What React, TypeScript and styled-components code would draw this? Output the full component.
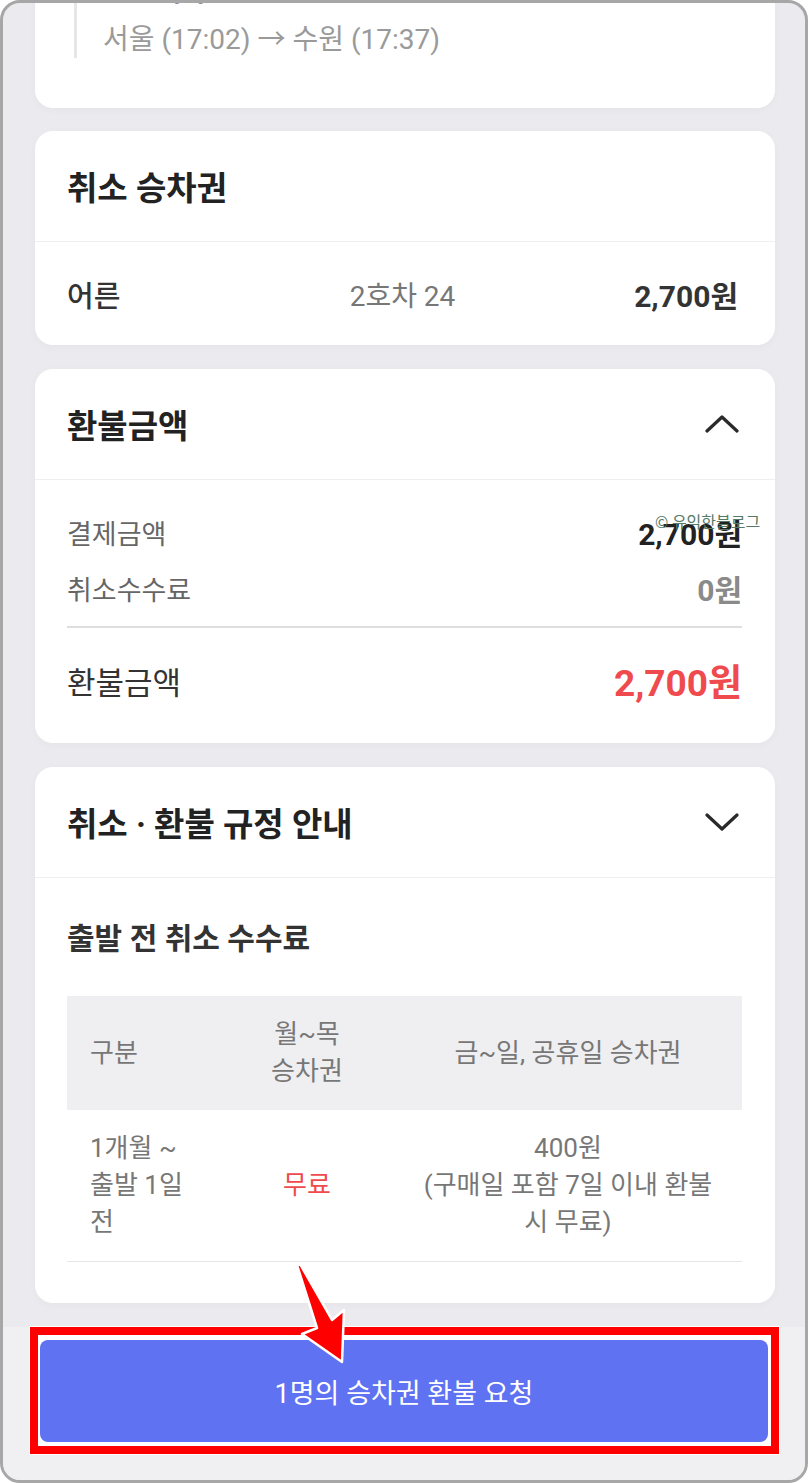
import React from "react";
import styled, { createGlobalStyle } from "styled-components";

const GlobalStyle = createGlobalStyle`
  * { box-sizing: border-box; }
  body {
    margin: 0;
    font-family: Roboto, "Noto Sans CJK KR", sans-serif;
    background: #ffffff;
  }
`;

const ChevronIcon = ({ up }: { up?: boolean }) => (
  <svg width="34" height="18" viewBox="0 0 34 18">
    <polyline
      points={up ? "2,16 17,2 32,16" : "2,2 17,16 32,2"}
      fill="none"
      stroke="#2a2a2a"
      strokeWidth="3.2"
      strokeLinecap="round"
      strokeLinejoin="round"
    />
  </svg>
);

const App = () => {
  return (
    <>
      <GlobalStyle />
      <Frame>
        <Watermark>© 유익한블로그</Watermark>
        <Arrow width="70" height="110" viewBox="0 0 70 110">
          <path
            d="M7 3 L10 2 L42 58 L54 48 L52 100 L12 72 L27 66 Z"
            fill="#ff0000"
            stroke="#ffffff"
            strokeWidth="2.5"
            strokeLinejoin="round"
          />
        </Arrow>
        <RouteCard>
          <RouteBlock>
            <RouteName>ITX-새마을 1호</RouteName>
            <RouteText>서울 (17:02) → 수원 (17:37)</RouteText>
          </RouteBlock>
        </RouteCard>

        <Card>
          <CardHeader>
            <CardTitle>취소 승차권</CardTitle>
          </CardHeader>
          <TicketRow>
            <TicketType>어른</TicketType>
            <TicketSeat>2호차 24</TicketSeat>
            <TicketPrice>2,700원</TicketPrice>
          </TicketRow>
        </Card>

        <Card>
          <CardHeader>
            <CardTitle>환불금액</CardTitle>
            <ChevronIcon up />
          </CardHeader>
          <AmountBody>
            <AmountRow>
              <AmountLabel>결제금액</AmountLabel>
              <AmountValue>2,700원</AmountValue>
            </AmountRow>
            <AmountRow>
              <AmountLabel>취소수수료</AmountLabel>
              <AmountValue $muted>0원</AmountValue>
            </AmountRow>
            <AmountDivider />
            <TotalRow>
              <TotalLabel>환불금액</TotalLabel>
              <TotalValue>2,700원</TotalValue>
            </TotalRow>
          </AmountBody>
        </Card>

        <Card>
          <CardHeader>
            <CardTitle>취소 · 환불 규정 안내</CardTitle>
            <ChevronIcon />
          </CardHeader>
          <RuleBody>
            <RuleTitle>출발 전 취소 수수료</RuleTitle>
            <FeeTable>
              <colgroup>
                <col style={{ width: 153 }} />
                <col style={{ width: 174 }} />
                <col style={{ width: 348 }} />
              </colgroup>
              <thead>
                <tr>
                  <HeadCell $left>구분</HeadCell>
                  <HeadCell>월~목 승차권</HeadCell>
                  <HeadCell>금~일, 공휴일 승차권</HeadCell>
                </tr>
              </thead>
              <tbody>
                <tr>
                  <BodyCell $left>1개월 ~ 출발 1일 전</BodyCell>
                  <BodyCell $red>무료</BodyCell>
                  <BodyCell>
                    400원
                    <br />
                    (구매일 포함 7일 이내 환불 시 무료)
                  </BodyCell>
                </tr>
              </tbody>
            </FeeTable>
          </RuleBody>
        </Card>

        <BottomArea>
          <HighlightBox>
            <RefundButton>1명의 승차권 환불 요청</RefundButton>
          </HighlightBox>
        </BottomArea>
      </Frame>
    </>
  );
};

const Frame = styled.div`
  position: relative;
  width: 808px;
  height: 1483px;
  border: 3px solid #a7a7a7;
  border-radius: 20px;
  overflow: hidden;
  background: #ebebef;
  display: flex;
  flex-direction: column;
  gap: 24px;
  padding: 0 30px 0 32px;
`;

const Card = styled.div`
  background: #ffffff;
  border-radius: 18px;
  box-shadow: 0 2px 8px rgba(0, 0, 0, 0.03);
  flex-shrink: 0;
`;

const RouteCard = styled(Card)`
  margin-top: -80px;
  margin-bottom: -1px;
  padding: 51px 32px 50px 39px;
`;

const RouteBlock = styled.div`
  border-left: 3px solid #e6e6e8;
  padding-left: 26px;
`;

const RouteName = styled.div`
  font-size: 28px;
  line-height: 36px;
  font-weight: 700;
  color: #333;
  margin-bottom: 12px;
`;

const RouteText = styled.div`
  font-size: 28px;
  line-height: 36px;
  color: #9a9a9a;
`;

const CardHeader = styled.div`
  height: 111px;
  display: flex;
  align-items: center;
  justify-content: space-between;
  padding: 0 36px 0 32px;
  border-bottom: 1px solid #efeff1;
`;

const CardTitle = styled.div`
  font-size: 33px;
  font-weight: 700;
  color: #222;
`;

const TicketRow = styled.div`
  height: 103px;
  display: grid;
  grid-template-columns: 1fr auto 1fr;
  align-items: center;
  padding: 0 37px 0 32px;
`;

const TicketType = styled.div`
  font-size: 29px;
  font-weight: 500;
  color: #333;
`;

const TicketSeat = styled.div`
  font-size: 28px;
  color: #777;
`;

const TicketPrice = styled.div`
  justify-self: end;
  font-size: 30px;
  font-weight: 700;
  color: #333;
`;

const AmountBody = styled.div`
  padding: 24px 33px 11px 32px;
`;

const AmountRow = styled.div`
  height: 56px;
  display: flex;
  align-items: center;
  justify-content: space-between;
`;

const AmountLabel = styled.div`
  font-size: 27px;
  color: #666;
`;

const AmountValue = styled.div<{ $muted?: boolean }>`
  font-size: 30px;
  font-weight: 700;
  color: ${(p) => (p.$muted ? "#8a8a8a" : "#222")};
`;

const AmountDivider = styled.div`
  margin-top: 10px;
  height: 2px;
  background: #dedee0;
`;

const TotalRow = styled.div`
  height: 104px;
  display: flex;
  align-items: center;
  justify-content: space-between;
`;

const TotalLabel = styled.div`
  font-size: 31px;
  color: #333;
`;

const TotalValue = styled.div`
  font-size: 37px;
  font-weight: 700;
  color: #ef4b4e;
`;

const RuleBody = styled.div`
  padding: 43px 33px 41px 32px;
`;

const RuleTitle = styled.div`
  font-size: 30px;
  line-height: 36px;
  font-weight: 700;
  color: #333;
  margin-bottom: 39px;
`;

const FeeTable = styled.table`
  width: 675px;
  border-collapse: collapse;
  table-layout: fixed;
  word-break: keep-all;
`;

const HeadCell = styled.th<{ $left?: boolean }>`
  background: #efeff2;
  font-size: 26px;
  line-height: 37px;
  font-weight: 400;
  color: #777;
  padding: 20px 23px;
  text-align: ${(p) => (p.$left ? "left" : "center")};
  vertical-align: middle;
`;

const BodyCell = styled.td<{ $left?: boolean; $red?: boolean }>`
  font-size: 26px;
  line-height: 37px;
  color: ${(p) => (p.$red ? "#ef4b4e" : "#777")};
  padding: 20px 23px;
  text-align: ${(p) => (p.$left ? "left" : "center")};
  vertical-align: middle;
  border-bottom: 1px solid #e6e6e8;
`;

const BottomArea = styled.div`
  flex: 1;
  margin: 0 -30px 0 -32px;
  padding: 0 26px 0 27px;
  background: #f0f0f2;
`;

const HighlightBox = styled.div`
  border: 8px solid #ff0000;
  outline: 1px solid #ffffff;
  padding: 5px 3px 4px 2px;
  background: #ffffff;
`;

const RefundButton = styled.button`
  display: block;
  width: 100%;
  height: 102px;
  border: none;
  border-radius: 8px;
  background: #5e72f2;
  color: #ffffff;
  font-family: Roboto, "Noto Sans CJK KR", sans-serif;
  font-size: 27px;
  cursor: pointer;
`;

const Watermark = styled.div`
  position: absolute;
  left: 652px;
  top: 506px;
  font-size: 16px;
  color: #557a66;
  z-index: 2;
  font-family: "Noto Sans CJK KR", sans-serif;
`;

const Arrow = styled.svg`
  position: absolute;
  left: 287px;
  top: 1259px;
  z-index: 3;
`;

export default App;
